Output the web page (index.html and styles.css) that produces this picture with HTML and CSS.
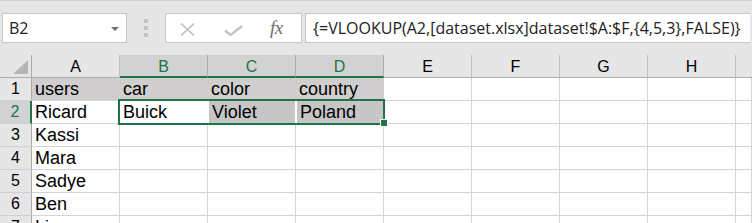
FILE: index.html
```html
<!DOCTYPE html>
<html>
<head>
<meta charset="utf-8">
<link rel="stylesheet" href="styles.css">
</head>
<body>
<div class="bar">
  <div class="namebox"><span class="nb-text">B2</span><span class="caret"></span></div>
  <div class="grip"><i></i><i></i><i></i></div>
  <div class="btns">
    <svg class="ic-x" width="15" height="13" viewBox="0 0 15 13"><path d="M1 0.5 L14 12.5 M14 0.5 L1 12.5" stroke="#bdbdbd" stroke-width="1.6" fill="none"/></svg>
    <svg class="ic-ok" width="19" height="11" viewBox="0 0 19 11"><path d="M1 5.5 L6.5 10 L18 1" stroke="#c4c4c4" stroke-width="2.4" fill="none" stroke-linejoin="miter"/></svg>
    <span class="fx">fx</span>
  </div>
  <div class="formula">{=VLOOKUP(A2,[dataset.xlsx]dataset!$A:$F,{4,5,3},FALSE)}</div>
</div>
<div class="sheet">
  <div class="corner"><span class="tri"></span></div>
  <div class="h">A</div>
  <div class="h hs">B</div>
  <div class="h hs">C</div>
  <div class="h hs">D</div>
  <div class="h">E</div>
  <div class="h">F</div>
  <div class="h">G</div>
  <div class="h">H</div>
  <div class="h hl"></div>

  <div class="r">1</div>
  <div class="c fill">users</div>
  <div class="c fill">car</div>
  <div class="c fill">color</div>
  <div class="c fill">country</div>
  <div class="c"></div><div class="c"></div><div class="c"></div><div class="c"></div><div class="c"></div>

  <div class="r rs">2</div>
  <div class="c">Ricard</div>
  <div class="c act">Buick</div>
  <div class="c sel2">Violet</div>
  <div class="c sel2">Poland</div>
  <div class="c"></div><div class="c"></div><div class="c"></div><div class="c"></div><div class="c"></div>

  <div class="r">3</div>
  <div class="c">Kassi</div>
  <div class="c"></div><div class="c"></div><div class="c"></div><div class="c"></div><div class="c"></div><div class="c"></div><div class="c"></div><div class="c"></div>

  <div class="r">4</div>
  <div class="c">Mara</div>
  <div class="c"></div><div class="c"></div><div class="c"></div><div class="c"></div><div class="c"></div><div class="c"></div><div class="c"></div><div class="c"></div>

  <div class="r">5</div>
  <div class="c">Sadye</div>
  <div class="c"></div><div class="c"></div><div class="c"></div><div class="c"></div><div class="c"></div><div class="c"></div><div class="c"></div><div class="c"></div>

  <div class="r">6</div>
  <div class="c">Ben</div>
  <div class="c"></div><div class="c"></div><div class="c"></div><div class="c"></div><div class="c"></div><div class="c"></div><div class="c"></div><div class="c"></div>

  <div class="r">7</div>
  <div class="c">Lisa</div>
  <div class="c"></div><div class="c"></div><div class="c"></div><div class="c"></div><div class="c"></div><div class="c"></div><div class="c"></div><div class="c"></div>

  <div class="selbox"></div>
  <div class="handle"></div>
</div>
</body>
</html>
```

FILE: styles.css
```css
* { box-sizing: border-box; }
html, body { margin: 0; padding: 0; background: #ffffff; overflow: hidden; }
body { width: 752px; height: 223px; font-family: "Liberation Sans", Arial, sans-serif; }

.bar {
  height: 55px;
  background: #e6e6e6;
  border-top: 1px solid #d4d4d4;
  display: flex;
  align-items: flex-start;
  padding: 12px 2px 0 2px;
}
.namebox {
  width: 125px;
  height: 30px;
  background: #fff;
  border: 1px solid #c6c6c6;
  display: flex;
  align-items: center;
  justify-content: space-between;
  padding: 0 7px 0 6px;
  font-family: "Open Sans", "Noto Sans", sans-serif;
  font-size: 16px;
  color: #222;
}
.caret {
  width: 0; height: 0;
  border-left: 4px solid transparent;
  border-right: 4px solid transparent;
  border-top: 4px solid #6f6f6f;
  margin-top: 1px;
}
.grip {
  width: 38px;
  height: 30px;
  display: flex;
  flex-direction: column;
  align-items: center;
  justify-content: center;
  gap: 3px;
}
.grip i { display: block; width: 4px; height: 4px; background: #c3c3c3; }
.btns {
  width: 137px;
  height: 30px;
  background: #fff;
  border: 1px solid #c6c6c6;
  display: flex;
  align-items: center;
  padding-left: 14px;
}
.ic-x { margin-top: 2px; }
.ic-ok { margin-left: 29px; margin-top: 4px; }
.fx {
  margin-left: 27px;
  font-family: "Liberation Serif", "DejaVu Serif", serif;
  font-style: italic;
  font-size: 19px;
  color: #6e6e6e;
  letter-spacing: -0.5px;
  margin-top: -1px;
}
.formula {
  flex: 1;
  margin-left: 3px;
  height: 30px;
  background: #fff;
  border: 1px solid #c6c6c6;
  border-right: none;
  padding: 0 0 0 7px;
  display: flex;
  align-items: center;
  font-family: "Open Sans", "Noto Sans", sans-serif;
  font-size: 16px;
  color: #222;
  white-space: nowrap;
  overflow: hidden;
}

.sheet {
  position: relative;
  display: grid;
  grid-template-columns: 32px repeat(8, 88px) 1fr;
  grid-template-rows: repeat(8, 23px);
  font-size: 18px;
  color: #000;
}
.corner {
  background: #e6e6e6;
  border-right: 1px solid #ababab;
  border-bottom: 1px solid #ababab;
  display: flex;
  justify-content: flex-end;
  align-items: flex-end;
  padding: 0 3px 3px 0;
}
.tri {
  width: 15px; height: 14px;
  background: #b5b5b5;
  clip-path: polygon(100% 0, 100% 100%, 0 100%);
}
.h {
  background: #e6e6e6;
  border-right: 1px solid #c0c0c0;
  border-bottom: 1px solid #ababab;
  text-align: center;
  font-size: 16px;
  line-height: 22px;
  padding-top: 1px;
  color: #000;
}
.h.hs {
  background: #d2d2d2;
  color: #217346;
  border-right-color: #ababab;
  border-bottom: 2px solid #217346;
}
.h.hl { border-right: none; }
.r {
  background: #e6e6e6;
  border-right: 1px solid #ababab;
  border-bottom: 1px solid #d0d0d0;
  text-align: center;
  font-size: 16px;
  display: flex;
  align-items: flex-end;
  justify-content: center;
  line-height: 22px;
}
.r.rs {
  background: #d2d2d2;
  color: #217346;
  border-right: 2px solid #217346;
}
.c {
  border-right: 1px solid #d4d4d4;
  border-bottom: 1px solid #d4d4d4;
  padding-left: 3px;
  display: flex;
  align-items: flex-end;
  line-height: 22px;
  white-space: nowrap;
  overflow: hidden;
}
.c.fill {
  background: #d0cece;
  border-right-color: #d0cece;
}
.c.act { border-right-color: #ffffff; }
.c.sel2 {
  background: #c6c6c6;
  border-right-color: #ffffff;
  border-left: 1px solid #ffffff;
  border-bottom-color: #ffffff;
}
.selbox {
  position: absolute;
  left: 118px;
  top: 44px;
  width: 267px;
  height: 26px;
  border: 2px solid #217346;
  pointer-events: none;
}
.handle {
  position: absolute;
  left: 380px;
  top: 64px;
  width: 8px;
  height: 8px;
  background: #217346;
  border: 1px solid #ffffff;
}
```
